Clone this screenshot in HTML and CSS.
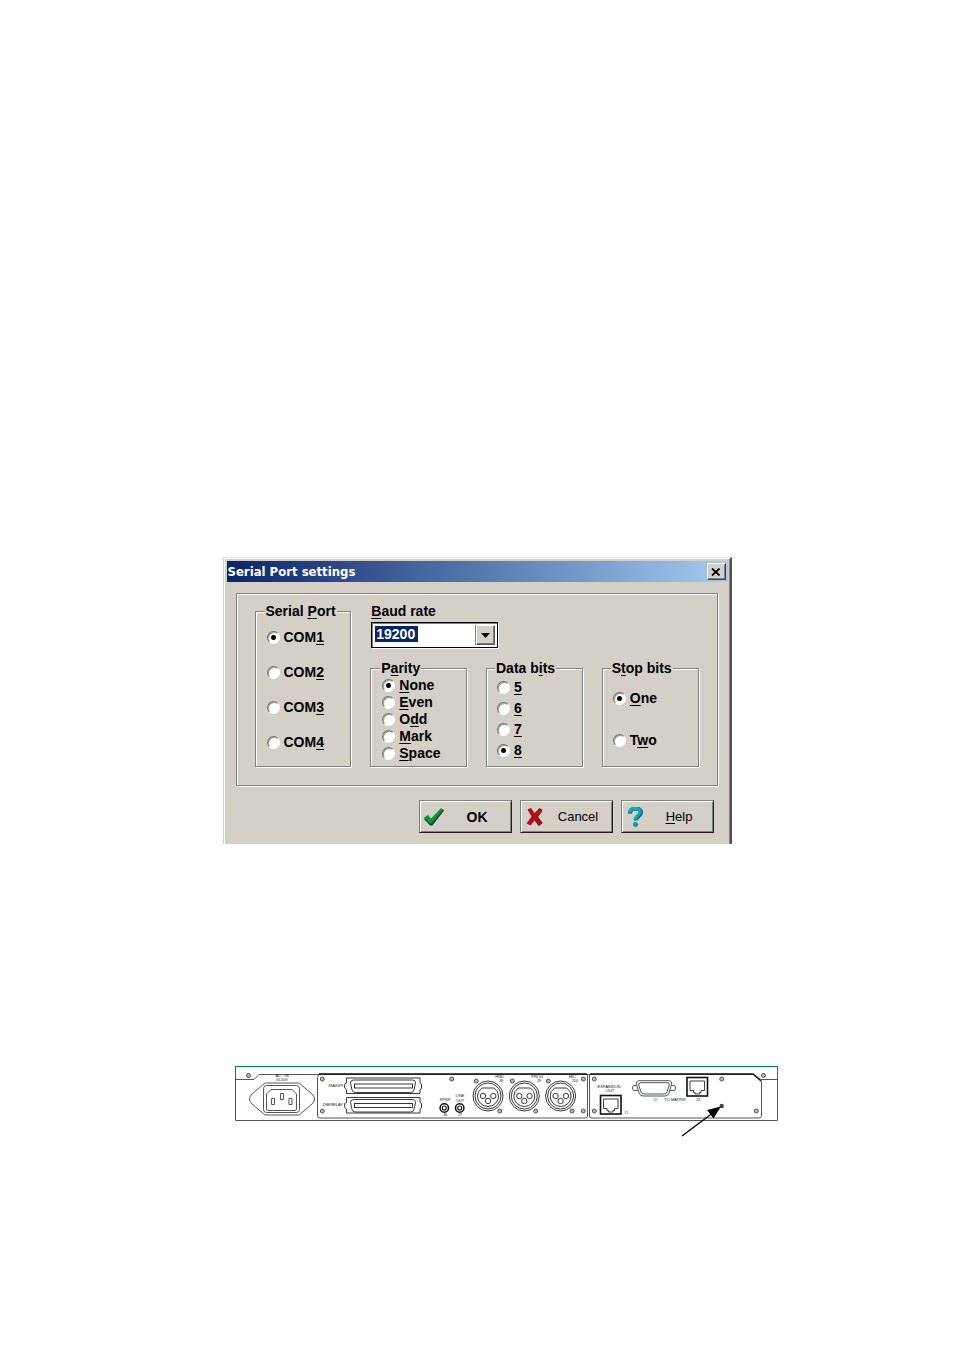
FILE: index.html
```
<!DOCTYPE html>
<html lang="en">
<head>
<meta charset="utf-8">
<title>Serial Port settings</title>
<link rel="stylesheet" href="styles.css">
</head>
<body>
<main class="page">
  <form class="dialog" aria-labelledby="dialog-title">
    <header class="titlebar">
      <h1 class="title" id="dialog-title">Serial Port settings</h1>
      <button class="close" type="button" aria-label="Close">
        <svg width="10" height="8" viewBox="0 0 10 8"><path d="M1 0.5L8.500 7.500M8.500 0.500L1 7.500" stroke="#000" stroke-width="1.800"/></svg>
      </button>
    </header>
    <div class="panel">
      <fieldset class="group port">
        <legend>Serial <u>P</u>ort</legend>
        <label class="option"><input type="radio" name="port" checked><span>COM<u>1</u></span></label>
        <label class="option"><input type="radio" name="port"><span>COM<u>2</u></span></label>
        <label class="option"><input type="radio" name="port"><span>COM<u>3</u></span></label>
        <label class="option"><input type="radio" name="port"><span>COM<u>4</u></span></label>
      </fieldset>
      <div class="baud">
        <label for="baud"><u>B</u>aud rate</label>
        <div class="combo">
          <select id="baud">
            <option>9600</option>
            <option selected>19200</option>
            <option>38400</option>
          </select>
          <span class="arrow"><svg width="9" height="5" viewBox="0 0 9 5"><path d="M0 0H9L4.500 5Z"/></svg></span>
        </div>
      </div>
      <fieldset class="group parity">
        <legend>P<u>a</u>rity</legend>
        <label class="option"><input type="radio" name="parity" checked><span><u>N</u>one</span></label>
        <label class="option"><input type="radio" name="parity"><span><u>E</u>ven</span></label>
        <label class="option"><input type="radio" name="parity"><span>O<u>d</u>d</span></label>
        <label class="option"><input type="radio" name="parity"><span><u>M</u>ark</span></label>
        <label class="option"><input type="radio" name="parity"><span><u>S</u>pace</span></label>
      </fieldset>
      <fieldset class="group data">
        <legend>Data b<u>i</u>ts</legend>
        <label class="option"><input type="radio" name="data"><span><u>5</u></span></label>
        <label class="option"><input type="radio" name="data"><span><u>6</u></span></label>
        <label class="option"><input type="radio" name="data"><span><u>7</u></span></label>
        <label class="option"><input type="radio" name="data" checked><span><u>8</u></span></label>
      </fieldset>
      <fieldset class="group stop">
        <legend>S<u>t</u>op bits</legend>
        <label class="option"><input type="radio" name="stop" checked><span><u>O</u>ne</span></label>
        <label class="option"><input type="radio" name="stop"><span>T<u>w</u>o</span></label>
      </fieldset>
    </div>
    <footer class="actions">
      <button class="action primary" type="button">
        <svg width="20" height="18" viewBox="0 0 20 18"><path d="M0 11L4 8L7.500 11.500L17.500 0.500L20 2.500L8.500 17.500H6Z" fill="#103c50"/><path d="M0 9.500L4 7L7 10.500L17 0L19 1.500L7.500 15.500H5.500Z" fill="#0a9a28"/></svg>
        <span>OK</span>
      </button>
      <button class="action" type="button">
        <svg width="20" height="18" viewBox="0 0 20 18"><path d="M2.500 1.500L6 0L9.500 5L14.500 0L17.500 1.500L12.500 8.500L17.500 15L13.500 18L9.500 12.500L5.500 17.500L1.500 15.500L6.500 8.500Z" fill="#ad1018"/><path d="M17 3L12.500 9L17 15L13.500 17.500" fill="none" stroke="#650b10"/></svg>
        <span>Cancel</span>
      </button>
      <button class="action" type="button">
        <svg width="20" height="20" viewBox="0 0 20 20"><path d="M4 6.500C4 0 15 0 15 5.500C15 9 9.500 9.500 10 13.500" fill="none" stroke="#075a70" stroke-width="4"/><path d="M3.500 5.500C4 0 14 0 14 5C14 8.500 8.500 9 9 13" fill="none" stroke="#08adbc" stroke-width="3.200"/><circle cx="9.500" cy="17.500" r="2.300" fill="#075a70"/><circle cx="9" cy="17" r="1.900" fill="#08adbc"/></svg>
        <span><u>H</u>elp</span>
      </button>
    </footer>
  </form>

  <svg class="device" viewBox="0 0 545 72" role="img" aria-label="Rear panel">
    <defs>
      <g id="screw"><circle r="2" fill="#bbb" stroke="#333" stroke-width="0.800"/></g>
      <g id="xlr" fill="none" stroke="#222" stroke-width="0.900">
        <circle r="15"/><circle r="13"/>
        <path d="M-6-8H6Q10.500-5 10.500 0A10.500 10.500 0 0 1-10.500 0Q-10.500-5-6-8Z"/>
        <circle cx="-5" r="2.700"/><circle cx="5.300" r="2.700"/><circle cy="5" r="2.700"/>
      </g>
      <g id="jack" fill="none" stroke="#111"><circle r="4.200" stroke-width="1.500"/><circle r="2" stroke-width="1.100"/></g>
      <g id="rj" fill="none" stroke="#111">
        <rect width="20.500" height="18.500" stroke-width="1.600"/>
        <path d="M3 3.500H17.500V13H14V15H12.500V16.500H8V15H6.500V13H3Z" stroke-width="0.800"/>
      </g>
      <g id="multi" fill="none" stroke="#222" stroke-width="0.900">
        <path d="M0 0H73.500V5L75 6V10.500L73.500 11.500V15.500H0V11.500L-1.800 10V6L0 5Z"/>
        <path d="M7 2H66Q69 2 69 5L67.500 12Q67 14.500 64 14.500H9Q6 14.500 5.500 12L4 5Q4 2 7 2Z"/>
        <rect x="8" y="6" width="58" height="4"/>
      </g>
    </defs>
    <g fill="none" stroke="#444" stroke-width="0.900">
      <path d="M1.500 1V54.500H543.500V1"/>
      <path d="M1 13.500H20L25 8.500H519.500L527 13.500H543.500"/>
      <path d="M85 9Q83.500 9 83.500 12V50Q83.500 52 86 52H351Q353.500 52 353.500 50V9"/>
      <path d="M355.500 9V50Q355.500 52 358 52H525Q527.500 52 527.500 50V14.500"/>
      <path d="M31 17H65L78 28Q83 33 78 38L65 49H31L18 38Q13 33 18 28Z"/>
      <rect x="29.500" y="19.500" width="36" height="27" rx="3"/>
      <path d="M32.500 43V28L37 23.500H58L62.500 28V43Q62.500 44.500 61 44.500H34Q32.500 44.500 32.500 43Z"/>
      <path d="M46.500 27.500H49.500V33.500H46.500ZM37.500 32.500H40.500V38.500H37.500ZM55 32.500H58V38.500H55Z"/>
      <path d="M406 14.700H434Q438.500 14.700 437.500 18.500L435 27Q434 30 431 30H409Q406 30 405 27L402.500 18.500Q401.500 14.700 406 14.700Z"/>
      <path d="M407 16.700H433Q436 16.700 435.300 19L433 26Q432.500 28 430 28H410Q407.500 28 407 26L404.700 19Q404 16.700 407 16.700Z"/>
      <path d="M402.500 19.500H399.500Q397 22 399.500 24.500H404M437.500 19.500H440.500Q443 22 440.500 24.500H436"/>
    </g>
    <path d="M85 8H353M356 8H519L527 15" fill="none" stroke="#111" stroke-width="1.300"/>
    <path d="M1 0.500H544" stroke="#008055" stroke-width="1"/>
    <use href="#multi" x="112.500" y="12"/><use href="#multi" x="112.500" y="31.500"/>
    <use href="#xlr" x="254" y="30"/><use href="#xlr" x="290.300" y="30"/><use href="#xlr" x="326.600" y="30"/>
    <use href="#jack" x="210.300" y="42"/><use href="#jack" x="225.700" y="42"/>
    <use href="#rj" x="366.500" y="29.500"/><use href="#rj" x="453" y="11.500"/>
    <use href="#screw" x="14.500" y="9.500"/><use href="#screw" x="529.500" y="9.500"/>
    <use href="#screw" x="88.300" y="13"/><use href="#screw" x="88.300" y="45"/>
    <use href="#screw" x="217.700" y="13"/><use href="#screw" x="242.300" y="15"/>
    <use href="#screw" x="278.300" y="15"/><use href="#screw" x="314.300" y="15"/>
    <use href="#screw" x="265.700" y="45"/><use href="#screw" x="301.700" y="45"/>
    <use href="#screw" x="338" y="45"/><use href="#screw" x="349.300" y="13"/>
    <use href="#screw" x="349.300" y="45"/><use href="#screw" x="360.300" y="13"/>
    <use href="#screw" x="360.300" y="45"/><use href="#screw" x="487.700" y="13"/>
    <use href="#screw" x="522.300" y="45"/>
    <circle cx="487.700" cy="40" r="2.200" fill="#444"/>
    <path d="M448 70L478 47.500" stroke="#000" stroke-width="1.300"/>
    <path d="M487 40.500L473 44L479.500 52.500Z"/>
    <g class="marks">
      <text class="mid" x="48" y="11">AC - IN</text>
      <text class="mid tiny" x="48" y="15">90-240V</text>
      <text class="end" x="109" y="21">J9A/GPI</text>
      <text class="end" x="109" y="40">J9B/RELAY</text>
      <text class="mid" x="211" y="35">SPKR</text>
      <text class="mid" x="226" y="31">LINE</text>
      <text class="mid" x="226" y="36">OUT</text>
      <text class="mid" x="211" y="50">J6</text>
      <text class="mid" x="226" y="50">J7</text>
      <text class="end" x="270" y="12">HND</text>
      <text class="end" x="269" y="16">J8</text>
      <text class="end" x="309" y="12">PROG</text>
      <text class="end" x="307" y="16">J9</text>
      <text class="end" x="342" y="12">MIC</text>
      <text class="end" x="344" y="16">J10</text>
      <text class="mid" x="375" y="22">EXPANSION</text>
      <text class="mid" x="376" y="26">OUT</text>
      <text class="green" x="390" y="48">J1</text>
      <text class="mid green" x="421" y="35">J2</text>
      <text class="mid" x="441" y="35">TO MATRIX</text>
      <text class="mid" x="464" y="35">J3</text>
    </g>
  </svg>
</main>
</body>
</html>
```
FILE: styles.css
```
* { box-sizing: border-box; }

body {
  margin: 0;
  background: #fff;
  color: #000;
  font-family: "Liberation Sans", Arial, sans-serif;
}

.page {
  display: flex;
  flex-direction: column;
  align-items: center;
  min-height: 100vh;
  padding-top: 557px;
}

.dialog {
  width: 100%;
  max-width: 509px;
  padding: 3px 2px 11px 3px;
  border-left: 1px solid #d4d0c8;
  border-top: 1px solid #e4e2de;
  border-right: 2px solid #55534f;
  background: #d4d0c8;
  box-shadow: inset 1px 1px 0 #fff, inset -1px 0 0 #808080;
  font-size: 14px;
  font-weight: bold;
  line-height: 16px;
}

.titlebar {
  display: flex;
  align-items: center;
  justify-content: space-between;
  height: 21px;
  padding: 0 2px 0 1px;
  background: linear-gradient(to right, #0a246a, #a6caf0);
}

.title {
  margin: 0;
  color: #fff;
  font: bold 13px/20px "DejaVu Sans Condensed", "DejaVu Sans", sans-serif;
}

.close {
  display: grid;
  place-items: center;
  width: 19px;
  height: 17px;
  padding: 0;
  border: 1px solid;
  border-color: #fff #404040 #404040 #fff;
  background: #d4d0c8;
  box-shadow: inset -1px -1px 0 #808080;
}

.panel {
  display: grid;
  grid-template-columns: repeat(4, 1fr);
  column-gap: 19px;
  margin: 11px 10px 0 9px;
  padding: 9px 18px 18px;
  border: 1px solid #808080;
  box-shadow: inset 1px 1px 0 #fff, 1px 1px 0 #fff;
}

.group {
  display: flex;
  flex-direction: column;
  min-width: 0;
  margin: 0;
  padding: 0 0 5px 10px;
  border: 1px solid #808080;
  box-shadow: inset 1px 1px 0 #fff, 1px 1px 0 #fff;
}

.group legend {
  margin-left: -2px;
  padding: 0 1px;
  background: #d4d0c8;
  white-space: nowrap;
}

.port {
  grid-row: span 2;
  gap: 19px;
  padding-top: 10px;
}

.parity { gap: 1px; padding-top: 1px; }
.data { gap: 5px; padding-top: 3px; }
.stop { gap: 26px; padding-top: 14px; }

.option {
  display: flex;
  align-items: center;
  gap: 4px;
  height: 16px;
}

.option input {
  appearance: none;
  flex: none;
  width: 13px;
  height: 13px;
  margin: 0;
  border: 1px solid;
  border-color: #707070 #fff #fff #707070;
  border-radius: 50%;
  background: #fff;
  box-shadow: inset 1px 1px 0 #a09e9a;
}

.option input:checked {
  background: radial-gradient(circle at center, #000 2px, #fff 3px);
}

u {
  text-decoration-thickness: 1px;
  text-underline-offset: 2px;
}

.port, .parity { padding-left: 11px; }

.baud {
  grid-column: span 3;
  height: 57px;
  padding-left: 1px;
}

.baud label { display: block; }

.combo {
  position: relative;
  width: 127px;
  height: 26px;
  margin-top: 3px;
}

.combo select {
  appearance: none;
  width: 100%;
  height: 100%;
  padding: 0 24px 3px 4px;
  border: 1px solid #000;
  border-radius: 0;
  background: linear-gradient(#0a246a, #0a246a) 3px 3px / 43px 16px no-repeat #fff;
  box-shadow: inset 1px 1px 0 #808080, 1px 1px 0 #fff;
  color: #fff;
  font: bold 14px/16px "Liberation Sans", Arial, sans-serif;
}

.combo option { background: #fff; color: #000; }

.arrow {
  position: absolute;
  top: 3px;
  right: 3px;
  display: grid;
  place-items: center;
  width: 19px;
  height: 20px;
  border: 1px solid;
  border-color: #fff #555 #555 #fff;
  background: #d4d0c8;
  box-shadow: inset -1px -1px 0 #808080, -1px 0 0 #808080;
  pointer-events: none;
}

.actions {
  display: flex;
  justify-content: flex-end;
  gap: 8px;
  margin-top: 14px;
  padding-right: 14px;
}

.action {
  display: flex;
  align-items: center;
  width: 93px;
  height: 33px;
  padding: 0 4px;
  border: 1px solid;
  border-color: #808080 #202020 #202020 #808080;
  background: #d4d0c8;
  box-shadow: inset 1px 1px 0 #fff, inset -1px -1px 0 #808080;
  color: #000;
  font: 13px/16px "Liberation Sans", Arial, sans-serif;
}

.action span { flex: 1; padding-left: 4px; }
.action svg { flex: none; }
.primary { font-weight: bold; font-size: 14px; }

.device {
  width: calc(100% - 16px);
  max-width: 545px;
  margin: 222px 0 0 59px;
}

.marks { font-size: 4px; fill: #111; }
.mid { text-anchor: middle; }
.end { text-anchor: end; }
.tiny { font-size: 3px; }
.green { fill: #008055; }
```
